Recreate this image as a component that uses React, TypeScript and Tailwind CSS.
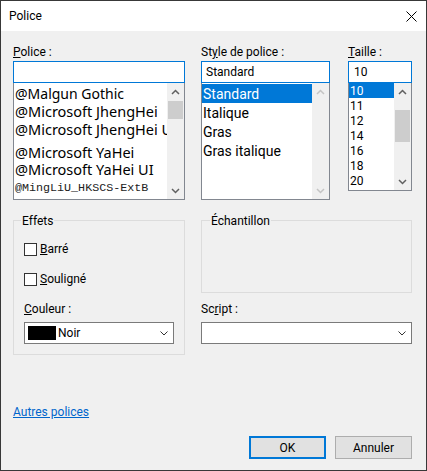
import type { ReactNode } from 'react'

function Arrow({ down, light }: { down?: boolean; light?: boolean }) {
  return (
    <svg width="9" height="6" viewBox="0 0 9 6" className="block">
      <path
        d={down ? 'M1 1L4.5 4.5L8 1' : 'M1 5L4.5 1.5L8 5'}
        fill="none"
        stroke={light ? '#c4c4c4' : '#606060'}
        strokeWidth="1.5"
      />
    </svg>
  )
}

function ScrollBar({ thumb, disabled }: { thumb?: string; disabled?: boolean }) {
  return (
    <div className="flex w-[17px] shrink-0 flex-col bg-[#f0f0f0]">
      <div className="flex h-[17px] items-center justify-center">
        <Arrow light={disabled} />
      </div>
      {thumb && <div className={`mx-[1px] bg-[#cdcdcd] ${thumb}`} />}
      <div className="mt-auto flex h-[17px] items-center justify-center">
        <Arrow down light={disabled} />
      </div>
    </div>
  )
}

function Combo({ children, className }: { children?: ReactNode; className: string }) {
  return (
    <div className={`flex h-[22px] items-center justify-between border border-[#7a7a7a] bg-white pr-[5px] ${className}`}>
      <div className="flex items-center">{children}</div>
      <svg width="8" height="5" viewBox="0 0 8 5" className="block">
        <path d="M0.5 0.5L4 4L7.5 0.5" fill="none" stroke="#333" strokeWidth="1" />
      </svg>
    </div>
  )
}

function Check({ children }: { children: ReactNode }) {
  return (
    <div className="flex h-[16px] items-center gap-[3px]">
      <div className="h-[13px] w-[13px] border border-[#333] bg-white" />
      <span>{children}</span>
    </div>
  )
}

// each entry is drawn in its own face on Windows, so sizes and gaps differ a bit
const fonts = [
  { name: '@Malgun Gothic', cls: 'h-[17px] text-[14px] leading-[17px]' },
  { name: '@Microsoft JhengHei', cls: 'h-[18px] text-[14.5px] leading-[18px]' },
  { name: '@Microsoft JhengHei UI', cls: 'mb-[5px] h-[18px] text-[14.5px] leading-[18px]' },
  { name: '@Microsoft YaHei', cls: 'h-[18px] text-[14.5px] leading-[18px]' },
  { name: '@Microsoft YaHei UI', cls: 'h-[17px] text-[14.5px] leading-[17px]' },
]

const styles = ['Standard', 'Italique', 'Gras', 'Gras italique']
const sizes = ['10', '11', '12', '14', '16', '18', '20']

export default function App() {
  return (
    <div className="flex h-[471px] w-[427px] flex-col border border-[#383838] bg-[#f0f0f0] font-['Roboto',sans-serif] text-[12px] leading-[16px] text-black">
      <div className="flex h-[30px] shrink-0 items-center justify-between bg-white pl-[8px] pr-[9px]">
        <span>Police</span>
        <svg width="11" height="11" viewBox="0 0 11 11" className="block">
          <path d="M0.5 0.5L10.5 10.5M10.5 0.5L0.5 10.5" stroke="#000" strokeWidth="1" />
        </svg>
      </div>

      <div className="flex flex-1 flex-col pl-[12px] pr-[14px] pt-[13px]">
        <div className="flex">
          <div className="flex w-[172px] flex-col">
            <div>
              <span className="underline">P</span>olice :
            </div>
            <div className="mt-[1px] h-[22px] border border-[#0078d7] bg-white" />
            <div className="flex h-[117px] border border-t-0 border-[#828790] bg-white">
              <div className="flex min-w-0 flex-1 flex-col overflow-hidden pl-[1px] pt-[2px] font-['Noto_Sans',sans-serif]">
                {fonts.map((f) => (
                  <div key={f.name} className={`whitespace-nowrap ${f.cls}`}>
                    {f.name}
                  </div>
                ))}
                <div className="whitespace-nowrap font-['Liberation_Mono',monospace] text-[11.7px] leading-[20px] text-[#222]">
                  @MingLiU_HKSCS-ExtB
                </div>
              </div>
              <ScrollBar thumb="mt-[1px] h-[18px]" />
            </div>
          </div>

          <div className="ml-[16px] flex w-[129px] flex-col">
            <div>
              St<span className="underline">y</span>le de police :
            </div>
            <div className="mt-[1px] h-[22px] border border-[#0078d7] bg-white pl-[4px] leading-[20px]">Standard</div>
            <div className="flex h-[117px] border border-t-0 border-[#828790] bg-white">
              <div className="flex flex-1 flex-col pt-[1px] text-[14px]">
                {styles.map((s, i) => (
                  <div
                    key={s}
                    className={i === 0 ? 'h-[19px] bg-[#0078d7] pl-[1px] leading-[20px] text-white' : 'h-[19px] pl-[1px] leading-[20px]'}
                  >
                    {s}
                  </div>
                ))}
              </div>
              <ScrollBar disabled />
            </div>
          </div>

          <div className="ml-[18px] flex w-[64px] flex-col">
            <div>
              <span className="underline">T</span>aille :
            </div>
            <div className="mt-[1px] h-[22px] border border-[#0078d7] bg-white pl-[5px] leading-[20px]">10</div>
            <div className="flex h-[108px] border border-t-0 border-[#828790] bg-white">
              <div className="flex flex-1 flex-col">
                {sizes.map((s, i) => (
                  <div
                    key={s}
                    className={i === 0 ? 'h-[15px] bg-[#0078d7] pl-[1px] leading-[17px] text-white' : 'h-[15px] pl-[1px] leading-[17px]'}
                  >
                    {s}
                  </div>
                ))}
              </div>
              <ScrollBar thumb="mt-[10px] h-[32px]" />
            </div>
          </div>
        </div>

        <div className="mt-[20px] flex items-start">
          <div className="relative flex h-[135px] w-[172px] flex-col border border-[#dcdcdc] pl-[10px] pt-[20px]">
            <span className="absolute -top-[8px] left-[7px] bg-[#f0f0f0] px-[1px]">Effets</span>
            <Check>
              <span className="underline">B</span>arré
            </Check>
            <div className="mt-[14px]">
              <Check>
                <span className="underline">S</span>ouligné
              </Check>
            </div>
            <div className="mt-[14px]">
              <span className="underline">C</span>ouleur :
            </div>
            <Combo className="mt-[5px] w-[150px]">
              <div className="ml-[3px] h-[14px] w-[28px] bg-black" />
              <span className="ml-[2px]">Noir</span>
            </Combo>
          </div>

          <div className="ml-[16px] flex w-[211px] flex-col">
            <div className="relative h-[73px] border border-[#dcdcdc]">
              <span className="absolute -top-[8px] left-[8px] bg-[#f0f0f0] px-[1px]">Échantillon</span>
            </div>
            <div className="mt-[8px]">
              Sc<span className="underline">r</span>ipt :
            </div>
            <Combo className="mt-[5px] w-full" />
          </div>
        </div>

        <span className="mt-[49px] self-start text-[#0066cc] underline">Autres polices</span>

        <div className="mt-[16px] flex justify-end gap-[9px]">
          <div className="flex h-[23px] w-[77px] items-center justify-center border-2 border-[#0078d7] bg-[#e1e1e1]">OK</div>
          <div className="flex h-[23px] w-[77px] items-center justify-center border border-[#adadad] bg-[#e1e1e1]">Annuler</div>
        </div>
      </div>
    </div>
  )
}
